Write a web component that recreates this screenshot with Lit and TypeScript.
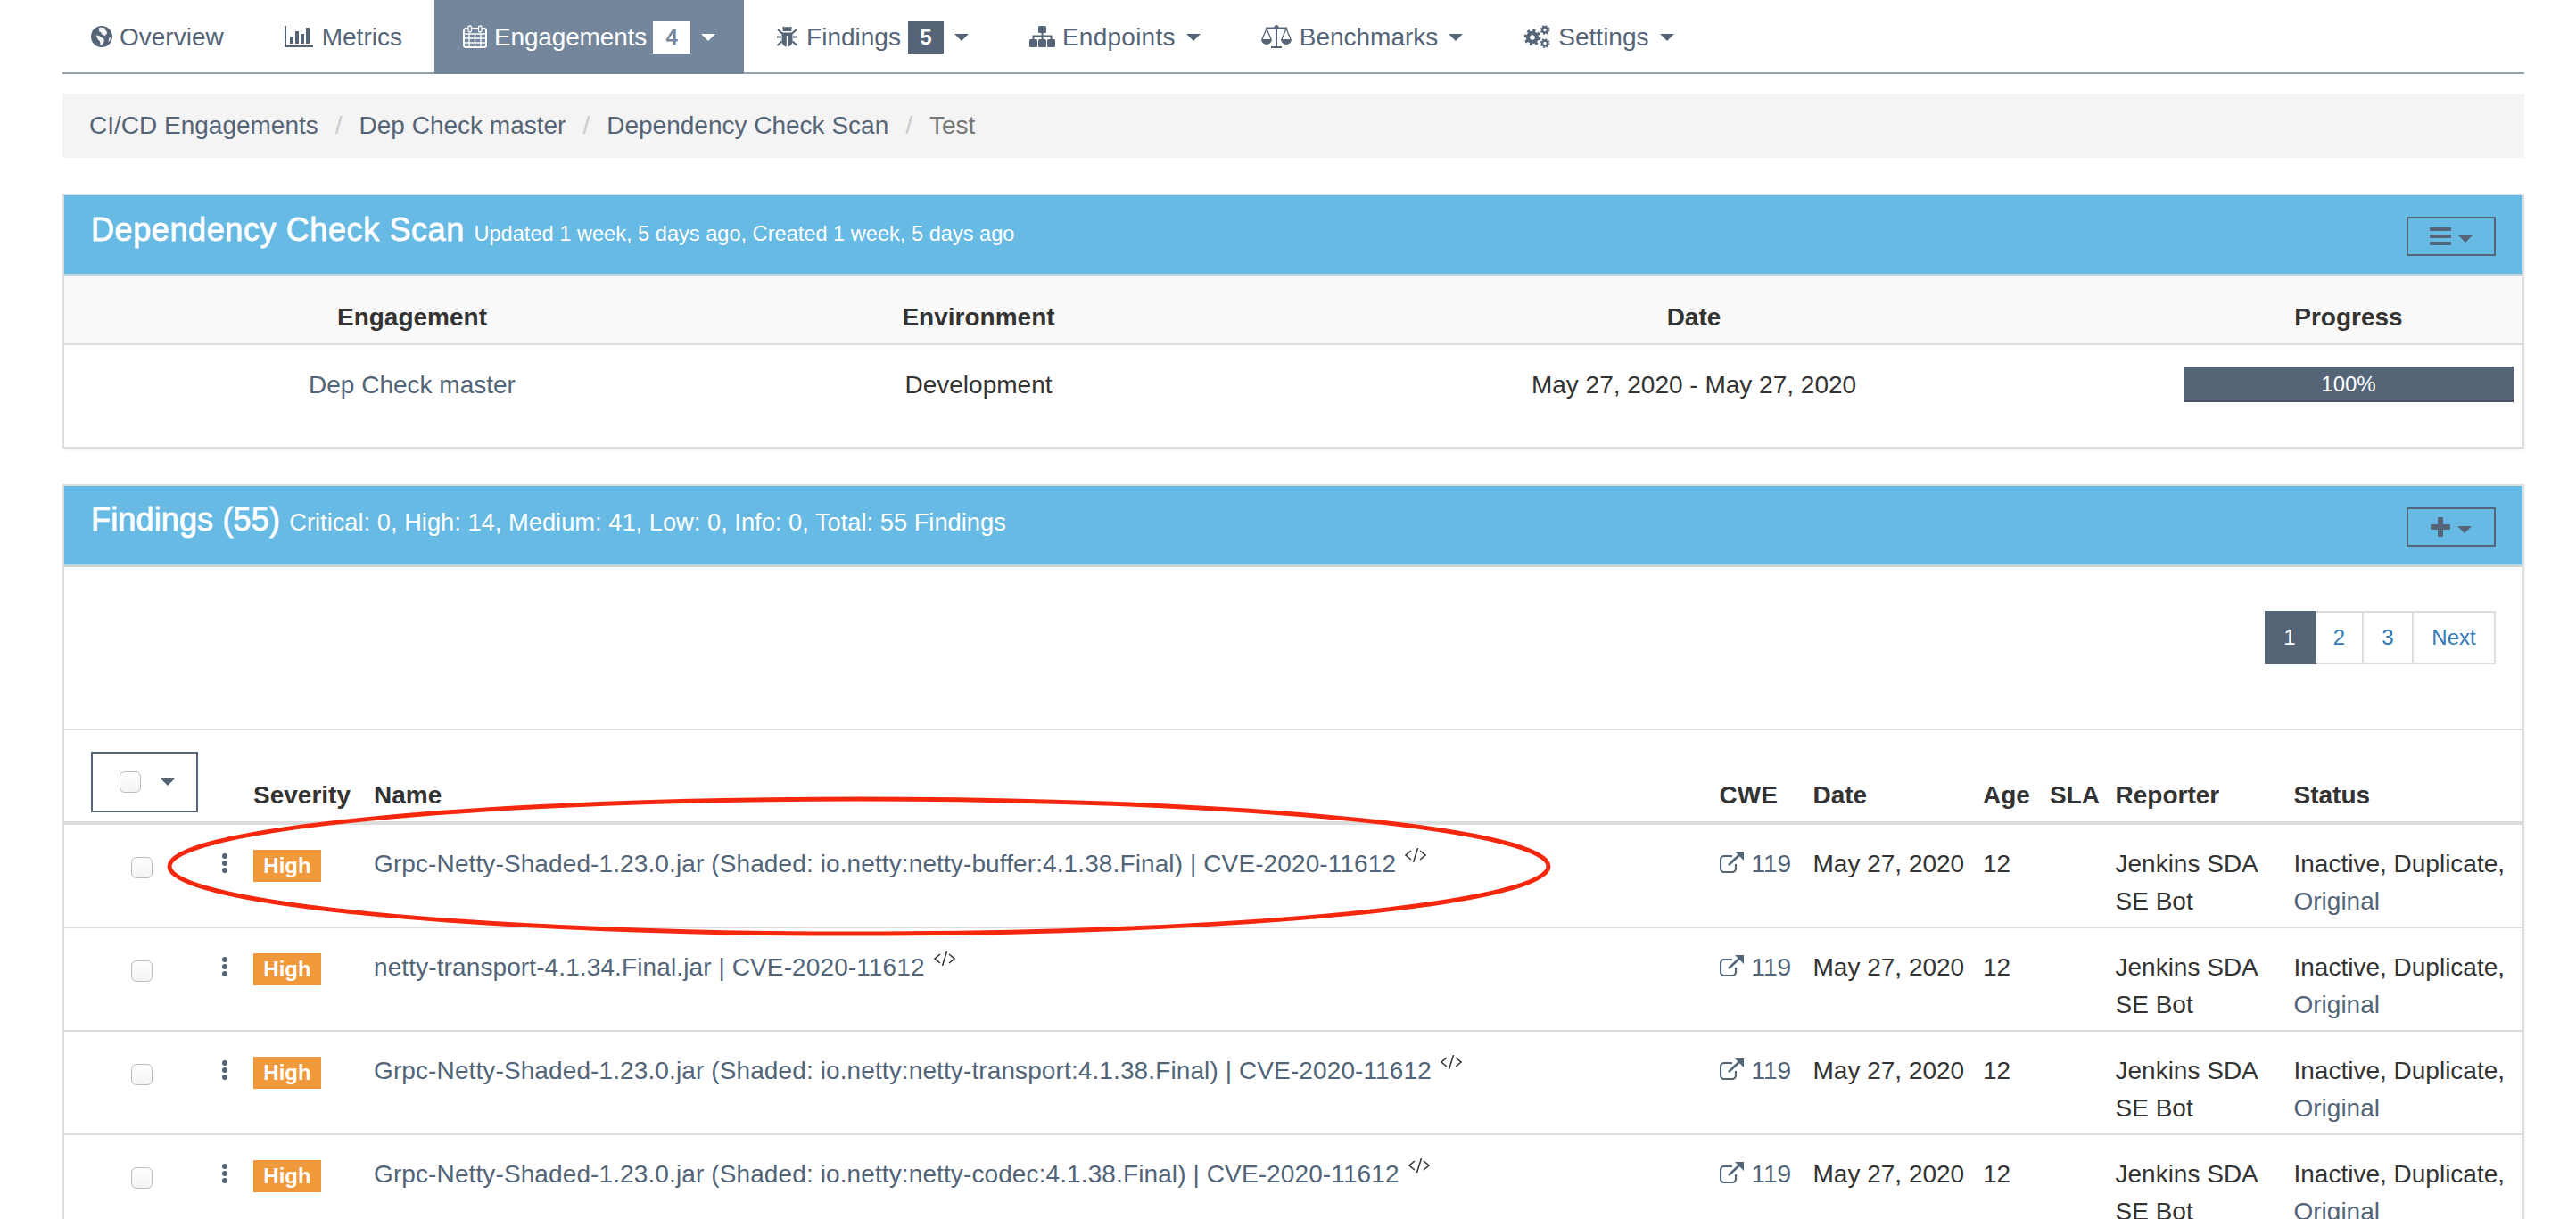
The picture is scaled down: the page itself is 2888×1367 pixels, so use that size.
import { LitElement, html, css, svg } from "lit";
import { customElement } from "lit/decorators.js";

const gear = (cx: number, cy: number, r: number, w: number, c: string) => svg`
  <circle cx=${cx} cy=${cy} r=${r} fill="none" stroke=${c} stroke-width=${w}/>
  <circle cx=${cx} cy=${cy} r=${r + w * 0.62} fill="none" stroke=${c} stroke-width=${w * 0.75}
    stroke-dasharray=${`${(2 * Math.PI * (r + w * 0.62)) / 16} ${(2 * Math.PI * (r + w * 0.62)) / 16}`}/>`;

const icons = {
  globe: html`<svg class="i tight" style="width:24px;height:24px" viewBox="0 0 24 24"><circle cx="12" cy="12" r="12" fill="currentColor"/><path fill="#fff" d="M9 2.200c2-.8 5-.6 7 .5l-.6 1.600 1.800 1.300 1 3-1.600.8-.5 2.200-1.700-1.400-2.200-.6-1-2.300-2-.8zM6 10.500l3 .6 2.500 2 2.300.9 1.200 2.400-1.500 3.100-1.500 1.900-1.400-.4-.6-3.500-2.200-2.300-1.500-2.700zM20.500 13l1.500-.3-.7 3.800-1.800 2z" opacity=".95"/></svg>`,
  chart: html`<svg class="i wide" style="width:32px;height:24px" viewBox="0 0 32 24"><g fill="currentColor"><rect x="0" y="0" width="2" height="24"/><rect x="0" y="22" width="32" height="2"/><rect x="6" y="12" width="4" height="8"/><rect x="12" y="6" width="4" height="14"/><rect x="18" y="9" width="4" height="11"/><rect x="24" y="2" width="4" height="18"/></g></svg>`,
  cal: html`<svg class="i tight" style="width:27px;height:26px" viewBox="0 0 27 26"><g fill="none" stroke="currentColor"><rect x="1" y="4" width="25" height="21" rx="2" stroke-width="2"/><path stroke-width="1.300" d="M1 10h25M1 15h25M1 20h25M7 10v15M13.500 10v15M20 10v15"/></g><rect x="6" y="1" width="3.500" height="7" rx="1.700" fill="#73869c" stroke="currentColor" stroke-width="1.300"/><rect x="17.500" y="1" width="3.500" height="7" rx="1.700" fill="#73869c" stroke="currentColor" stroke-width="1.300"/></svg>`,
  bug: html`<svg class="i" style="width:25px;height:24px" viewBox="0 0 25 24"><g fill="currentColor"><path d="M7.500 6a5 5 0 0 1 10 0z"/><path d="M6.500 7.500h12v9.500c0 3.500-2.500 6-5.300 6.500V11h-1.400v12.500C9 23 6.500 20.500 6.500 17z"/></g><path fill="none" stroke="currentColor" stroke-width="2.200" d="M1 12.500h5M19 12.500h5M2 4l5 4.500M23 4l-5 4.500M1.500 22l5-4.500M23.500 22l-5-4.500M8 1l1.500 3M17 1l-1.500 3"/></svg>`,
  sitemap: html`<svg class="i tight" style="width:29px;height:24px" viewBox="0 0 29 24"><g fill="currentColor"><rect x="10" y="0" width="9" height="8" rx="1.500"/><rect x="0" y="15" width="9" height="9" rx="1.500"/><rect x="10" y="15" width="9" height="9" rx="1.500"/><rect x="20" y="15" width="9" height="9" rx="1.500"/></g><path fill="none" stroke="currentColor" stroke-width="2" d="M14.500 8v7M4.500 15v-3.500h20V15"/></svg>`,
  scale: html`<svg class="i" style="width:34px;height:26px" viewBox="0 0 34 26"><g fill="currentColor"><rect x="16" y="3" width="2" height="21"/><rect x="11" y="24" width="12" height="2"/><rect x="5" y="2.500" width="24" height="2"/><circle cx="17" cy="2.500" r="2.500"/><path d="M0 16h12a6 6 0 0 1-12 0zM22 16h12a6 6 0 0 1-12 0z"/></g><path fill="none" stroke="currentColor" stroke-width="1.300" d="M6 4 1 16M6 4l5 12M28 4l-5 12M28 4l5 12"/></svg>`,
  cogs: html`<svg class="i" style="width:30px;height:26px" viewBox="0 0 30 26">${gear(10, 14, 5, 4.4, "currentColor")}${gear(24, 5.500, 3, 2.400, "currentColor")}${gear(24, 20.500, 3, 2.400, "currentColor")}</svg>`,
  bars: html`<svg style="width:24px;height:20px;display:block" viewBox="0 0 24 20"><g fill="currentColor"><rect y="0" width="24" height="4" rx="1"/><rect y="8" width="24" height="4" rx="1"/><rect y="16" width="24" height="4" rx="1"/></g></svg>`,
  plus: html`<svg style="width:22px;height:22px;display:block" viewBox="0 0 22 22"><path fill="currentColor" d="M8 1.500a1.500 1.500 0 0 1 1.500-1.500h3A1.500 1.500 0 0 1 14 1.500V8h6.500A1.500 1.500 0 0 1 22 9.500v3a1.500 1.500 0 0 1-1.500 1.500H14v6.500a1.500 1.500 0 0 1-1.500 1.500h-3A1.500 1.500 0 0 1 8 20.500V14H1.500A1.500 1.500 0 0 1 0 12.500v-3A1.500 1.500 0 0 1 1.500 8H8z"/></svg>`,
  ext: html`<svg class="ext" viewBox="0 0 28 24"><g fill="none" stroke="currentColor"><path stroke-width="2.200" d="M14 5H5a4 4 0 0 0-4 4v10a4 4 0 0 0 4 4h9a4 4 0 0 0 4-4v-5"/><path stroke-width="2.600" d="M10 15 24 2"/></g><path fill="currentColor" d="M17 0h10v10z"/></svg>`,
  dots: html`<svg class="dots" viewBox="0 0 6 22"><g fill="currentColor"><circle cx="3" cy="3" r="3"/><circle cx="3" cy="11" r="3"/><circle cx="3" cy="19" r="3"/></g></svg>`,
  code: html`<svg class="code" viewBox="0 0 24 16"><path fill="none" stroke="#333" stroke-width="1.500" d="M7 3 1 8l6 5M17 3l6 5-6 5M14.500 0l-5 16"/></svg>`,
};

const tabs = [
  { icon: icons.globe, label: "Overview" },
  { icon: icons.chart, label: "Metrics" },
  { icon: icons.cal, label: "Engagements", badge: "4", caret: true, active: true },
  { icon: icons.bug, label: "Findings", badge: "5", caret: true },
  { icon: icons.sitemap, label: "Endpoints", caret: true, spread: true },
  { icon: icons.scale, label: "Benchmarks", caret: true },
  { icon: icons.cogs, label: "Settings", caret: true },
];

const pages = [
  { t: "1", w: 58, active: true },
  { t: "2", w: 53 },
  { t: "3", w: 56 },
  { t: "Next", w: 92 },
];

const rows = [
  "Grpc-Netty-Shaded-1.23.0.jar (Shaded: io.netty:netty-buffer:4.1.38.Final) | CVE-2020-11612",
  "netty-transport-4.1.34.Final.jar | CVE-2020-11612",
  "Grpc-Netty-Shaded-1.23.0.jar (Shaded: io.netty:netty-transport:4.1.38.Final) | CVE-2020-11612",
  "Grpc-Netty-Shaded-1.23.0.jar (Shaded: io.netty:netty-codec:4.1.38.Final) | CVE-2020-11612",
];

@customElement("app-root")
export class AppRoot extends LitElement {
  static styles = css`
    :host {
      display: block;
      position: relative;
      width: 2888px;
      height: 1367px;
      overflow: hidden;
      background: #fff;
      color: #333;
      font-family: "Liberation Sans", Arial, sans-serif;
      font-size: 28px;
      line-height: 40px;
    }
    .page { padding: 0 58px 0 70px; }
    .nav { display: flex; height: 81px; border-bottom: 2px solid #8fa4b5; color: #556577; }
    .tab {
      display: flex; align-items: center; height: 83px; padding: 0 32px; margin-right: 4px;
      box-sizing: border-box; white-space: nowrap;
    }
    .tab.active { background: #73869c; color: #fff; letter-spacing: -.15px; }
    .tab.spread { letter-spacing: .25px; }
    .i { margin-right: 9px; flex: none; margin-top: -1px; }
    .i.tight { margin-right: 8px; }
    .i.wide { margin-right: 10px; }
    .badge {
      display: flex; align-items: center; justify-content: center; height: 36px; min-width: 40px;
      margin-left: 8px; background: #556577; color: #fff; font-size: 24px; font-weight: 700;
    }
    .active .badge { background: #fff; color: #73869c; width: 42px; margin-left: 7px; }
    .caret { width: 0; height: 0; border-style: solid; border-width: 8px 8px 0; border-color: currentColor transparent transparent; margin-left: 12px; }
    .crumbs {
      display: flex; align-items: center; height: 72px; margin-top: 22px; padding: 0 30px;
      background: #f4f4f4; color: #556577;
    }
    .crumbs .sep { color: #ccc; padding: 0 19px; }
    .crumbs .cur { color: #777; }
    .panel { border: 2px solid #ddd; box-shadow: 0 2px 4px rgba(0,0,0,.05); }
    .p1 { margin-top: 40px; height: 282px; }
    .p2 { margin-top: 40px; }
    .head {
      display: flex; align-items: center; justify-content: space-between;
      height: 88px; padding: 0 30px; background: #67bae3; border-bottom: 3px solid #c6d3da;
      color: #fff;
    }
    .title { font-size: 36px; line-height: 40px; -webkit-text-stroke: .8px #fff; margin-top: -7px; }
    .p1 .title { letter-spacing: .6px; }
    .p2 .title { letter-spacing: .15px; margin-top: -9px; }
    .title small { font-size: 23.600px; -webkit-text-stroke: 0; letter-spacing: 0; }
    .p2 .title small { font-size: 27.300px; letter-spacing: 0; }
    .btn {
      display: flex; align-items: center; justify-content: center; gap: 8px;
      width: 100px; height: 44px; margin-top: 4px; box-sizing: border-box; border: 2px solid #556577; color: #556577;
    }
    .btn .caret { margin-left: 0; margin-top: 5px; }
    .summary-h, .summary-b {
      display: grid; grid-template-columns: 780px 490px 1096px 1fr; text-align: center;
    }
    .summary-h { box-sizing: border-box; height: 77px; padding-top: 16px; background: #f9f9f9; border-bottom: 2px solid #ddd; font-weight: 700; align-items: center; }
    .summary-b { align-items: center; height: 90px; }
    .summary-h > :nth-child(3), .summary-b > :nth-child(3) { padding-left: 18px; }
    .lnk { color: #526478; }
    .bar {
      margin: -2px 10px 0; height: 40px; background: #556577; box-shadow: inset 0 -2px 0 rgba(0,0,0,.15);
      color: #fff; font-size: 24px; line-height: 40px;
    }
    .pager-wrap { display: flex; justify-content: flex-end; height: 183px; padding: 49px 30px 0 0; box-sizing: border-box; border-bottom: 2px solid #ddd; }
    .pager { display: flex; height: 60px; font-size: 24px; color: #337ab7; }
    .pg { display: flex; align-items: center; justify-content: center; box-sizing: border-box; border: 2px solid #ddd; border-left-width: 0; }
    .pg.on { background: #556577; border-color: #556577; color: #fff; }
    .grid {
      display: grid;
      grid-template-columns: 168px 44px 135px 1508.500px 105px 190.500px 75px 73.500px 200px 1fr;
      line-height: 42px;
    }
    .thead { border-bottom: 4px solid #ddd; font-weight: 700; align-items: end; padding-bottom: 8px; box-sizing: border-box; height: 106px; }
    .selbtn {
      display: flex; align-items: center; box-sizing: border-box; width: 120px; height: 68px;
      margin-left: 30px; margin-bottom: 2px; padding-left: 30px; border: 2px solid #556577; color: #556577;
    }
    .selbtn .caret { margin-left: 22px; }
    .cb {
      display: block; box-sizing: border-box; width: 24px; height: 24px; border: 1.500px solid #bdbdbd; border-radius: 6px;
      background: linear-gradient(#fff, #f4f4f4); flex: none;
    }
    .row { height: 116px; padding-top: 23px; box-sizing: border-box; border-bottom: 2px solid #ddd; align-items: start; }
    .row > .c0 { padding: 13px 0 0 75px; }
    .dots { display: block; width: 6px; height: 22px; margin: 9px 0 0 9px; color: #556577; }
    .sev {
      display: flex; align-items: center; justify-content: center; width: 76px; height: 36px; margin-top: 5px;
      background: #f0993a; color: #fff; font-size: 24px; font-weight: 700;
    }
    .name { letter-spacing: .11px; }
    .code { display: inline-block; width: 24px; height: 16px; margin-left: 10px; vertical-align: 11px; }
    .ext { display: inline-block; width: 28px; height: 24px; margin-right: 8px; vertical-align: -1px; }
    .oval { position: absolute; left: 0; top: 0; width: 2888px; height: 1367px; pointer-events: none; }
  `;

  render() {
    return html`
      <div class="page">
        <div class="nav">
          ${tabs.map(
            (t) => html`<div class="tab ${t.active ? "active" : ""} ${t.spread ? "spread" : ""}">
              ${t.icon}<span>${t.label}</span>
              ${t.badge ? html`<span class="badge">${t.badge}</span>` : ""}
              ${t.caret ? html`<span class="caret"></span>` : ""}
            </div>`
          )}
        </div>
        <div class="crumbs">
          <span>CI/CD Engagements</span><span class="sep">/</span>
          <span>Dep Check master</span><span class="sep">/</span>
          <span>Dependency Check Scan</span><span class="sep">/</span>
          <span class="cur">Test</span>
        </div>
        <section class="panel p1">
          <div class="head">
            <div class="title">Dependency Check Scan <small>Updated 1 week, 5 days ago, Created 1 week, 5 days ago</small></div>
            <div class="btn">${icons.bars}<span class="caret"></span></div>
          </div>
          <div class="summary-h"><div>Engagement</div><div>Environment</div><div>Date</div><div>Progress</div></div>
          <div class="summary-b">
            <div class="lnk">Dep Check master</div><div>Development</div><div>May 27, 2020 - May 27, 2020</div>
            <div><div class="bar">100%</div></div>
          </div>
        </section>
        <section class="panel p2">
          <div class="head">
            <div class="title">Findings (55) <small>Critical: 0, High: 14, Medium: 41, Low: 0, Info: 0, Total: 55 Findings</small></div>
            <div class="btn">${icons.plus}<span class="caret"></span></div>
          </div>
          <div class="pager-wrap">
            <div class="pager">
              ${pages.map((p) => html`<div class="pg ${p.active ? "on" : ""}" style="width:${p.w}px">${p.t}</div>`)}
            </div>
          </div>
          <div class="grid thead">
            <div class="selbtn"><span class="cb"></span><span class="caret"></span></div>
            <div></div>
            <div>Severity</div><div>Name</div><div>CWE</div><div>Date</div><div>Age</div><div>SLA</div><div>Reporter</div><div>Status</div>
          </div>
          ${rows.map(
            (name) => html`<div class="grid row">
              <div class="c0"><span class="cb"></span></div>
              <div>${icons.dots}</div>
              <div><div class="sev">High</div></div>
              <div class="lnk name">${name}${icons.code}</div>
              <div class="lnk">${icons.ext}119</div>
              <div>May 27, 2020</div>
              <div>12</div>
              <div></div>
              <div>Jenkins SDA<br />SE Bot</div>
              <div>Inactive, Duplicate,<br /><span class="lnk">Original</span></div>
            </div>`
          )}
        </section>
      </div>
      <svg class="oval" viewBox="0 0 2888 1367"><ellipse cx="963" cy="971.500" rx="773" ry="75.500" fill="none" stroke="#f5270c" stroke-width="5"/></svg>
    `;
  }
}
